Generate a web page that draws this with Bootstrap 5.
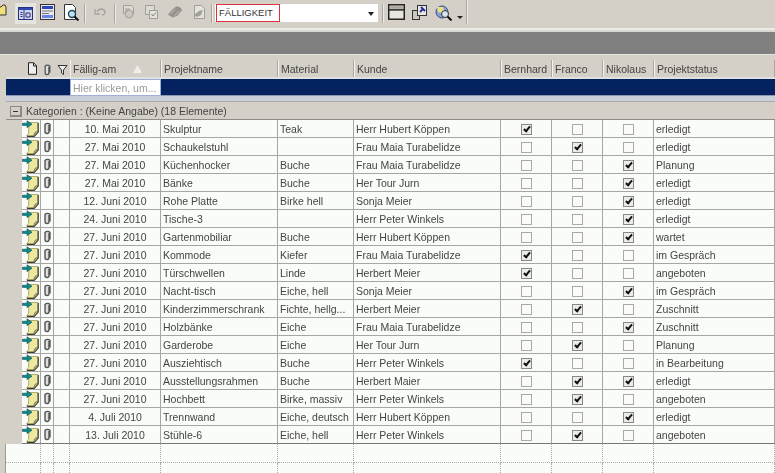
<!DOCTYPE html>
<html lang="de"><head><meta charset="utf-8"><title>Fälligkeit</title>
<link href="https://cdn.jsdelivr.net/npm/bootstrap@5.3.0/dist/css/bootstrap.min.css" rel="stylesheet">
<style>
html,body{height:473px;overflow:hidden}
body{background:#d4d0c8;font-family:"Liberation Sans",Arial,sans-serif;font-size:10.5px;color:#444}
.soft{filter:blur(.7px);height:473px}
.tbar{height:26px;padding:4px 0 0 0;overflow:hidden}
.tb-i{display:block;flex:none}
.tb-act{width:21px;height:21px;margin:-1px 4px 0 8px;background:#e6e4df;display:flex;align-items:center;justify-content:center}
.tb-sep{width:1px;height:19px;background:#a9a69f;box-shadow:1px 0 #eeece8;flex:none}
.combo{width:163px;height:18px;margin:0 0 0 3px;background:#fff;position:relative;flex:none}
.combo-red{display:block;width:64px;height:18px;margin-left:1px;border:1px solid #d8353a;padding:0 0 0 2px;line-height:15px;font-size:9.5px;color:#333}
.combo-arrow{position:absolute;right:4px;top:8px;width:0;height:0;border:3px solid transparent;border-top:4px solid #222}
.strip{height:6px;background:linear-gradient(#d4d0c8 0,#d4d0c8 2px,#ecebe6 2px,#ecebe6 4px,#dad8d2 4px)}
.band{height:22px;background:#808080}
.lead-gap{height:6px;background:#d4d0c8;border-top:1px solid #e6e5e0}
.wrap{padding-left:6px}
.grid-t{table-layout:fixed;width:769px;margin:0;border-collapse:separate;border-spacing:0;--bs-table-bg:transparent;color:#444;font-size:10.5px}
.table.grid-t>:not(caption)>*>*{padding:0 2px;height:18px;line-height:16px;border:0;white-space:nowrap;overflow:hidden;color:#444;vertical-align:middle;box-shadow:none}
.table.grid-t .hd>th{height:17px;background:#d4d0c8;font-weight:400;border-left:1px solid #f3f2ee;border-right:1px solid #aaa7a0;padding:1px 2px 0 2px}
.table.grid-t .hd>th.plain{border-left:0;border-right:0;padding:0;text-align:center}
.hd-doc{margin:0 3px 0 auto}
.table.grid-t .hd-gap>td{height:2px;padding:0;background:#dfe0e0;line-height:0}
.table.grid-t .flt>td{height:17px;background:#04225f;padding:0;border-bottom:1px solid #8b96b2}
.table.grid-t .flt>td.flt-in{background:#fff;border:1px solid #9fb0d6;color:#9a9a9a;padding:0 2px;line-height:14px}
.table.grid-t .flt-gap>td{height:6px;padding:0;background:#c9cfdb;line-height:0;border-bottom:1px solid #aaa}
.table.grid-t .grp>td{height:18px;background:#d4d0c8;border-bottom:1px solid #8c8c88;padding:0 3px}
.exp{display:inline-block;width:12px;height:11px;background:#d4d0c8;border:1px solid #8a8a86;border-width:1px 2px 2px 1px;position:relative;margin:0 4px 0 1px;vertical-align:-2px}
.exp::after{content:"";position:absolute;left:2px;right:2px;top:4px;height:1px;background:#333}
.table.grid-t .rw>td{background:#f9fcf8;border-right:1px solid #a6a6a6;border-bottom:1px solid #a6a6a6}
.table.grid-t .rw>td.ind{background:#d4d0c8;border:0}
.table.grid-t .rw>td.ic{padding:0;text-align:center}
.table.grid-t .rw>td.dt{text-align:center;padding:0}
.rw svg{display:inline-block;vertical-align:top}
.table.grid-t .rw:last-child>td:not(.ind){border-bottom:1px solid #777}
.cb{display:block;width:11px;height:11px;margin:2px auto 0;border:1px solid #a9a9a9;background:#fbfcfa;position:relative}
.cb-on{background:#ececea;border-color:#888}
.cb-on::after{content:"";position:absolute;left:3px;top:0;width:4px;height:7px;border:solid #111;border-width:0 2px 2px 0;transform:rotate(40deg)}
.blank{background:#fafcfa;height:29px;border-left:1px solid #9a9a96;margin-left:-1px}
.blank-r{display:flex}
.blank-c{flex:none;border-right:1px dotted #aaa;border-bottom:1px dotted #aaa;height:19px}
.blank-r2 .blank-c{border-bottom:0;height:10px}
.cw35{width:35px}.cw13{width:13px}.cw16{width:16px}.cw91{width:91px}.cw117{width:117px}.cw76{width:76px}.cw147{width:147px}.cw51{width:51px}.cw121{width:121px}
</style></head><body>
<svg width="0" height="0" class="position-absolute"><defs>
<symbol id="note" viewBox="0 0 18 17"><path d="M7 2.500h9v9.500l-4 4H4.500l2-2.500z" fill="#ece8a0" stroke="#a09d55" stroke-width=".8"/><path d="M16.200 3v9l-4 4.300H5" fill="none" stroke="#3c3c2c" stroke-width="1.200"/><path d="M12 16c0-3 1-4.500 4-4.500" fill="#bdb95f" stroke="#666" stroke-width=".8"/><path d="M.5 3.200h4.500V.8L10 4.200 5 7.600V5.400H.5z" fill="#0c8a8c" stroke="#0b4a50" stroke-width=".6"/></symbol>
<symbol id="clip" viewBox="0 0 9 14"><path d="M6.500 3.500v6.500a2 2 0 0 1-4 0V3a3 2.500 0 0 1 5 0v7" transform="translate(-.5 .5)" fill="#ddd" stroke="#555" stroke-width="1.400"/></symbol>
</defs></svg>
<div class="soft">
<div class="tbar d-flex align-items-start">
<svg class="tb-i" width="7" height="13" viewBox="0 0 7 13"><path d="M-3 3h4l2-2h2l1 2v8H-3z" fill="#efe27c" stroke="#333"/></svg>
<span class="tb-act"><svg width="15" height="13" viewBox="0 0 15 13"><rect x=".5" y=".5" width="14" height="12" fill="#cfd4ef" stroke="#2a2f7a"/><rect x="1" y="1" width="13" height="2" fill="#2f46b5"/><path d="M6 3v9M2.500 5.500h2M2.500 7.500h2M2.500 9.500h2M8 6h4v4H8z" stroke="#2a2f7a" fill="none"/></svg></span>
<svg class="tb-i me-2" width="15" height="16" viewBox="0 0 15 16"><rect x=".5" y=".5" width="14" height="15" fill="#e8e8ee" stroke="#333"/><rect x="2" y="2" width="11" height="3" fill="#2f46b5"/><path d="M2 7h11M2 9.500h7" stroke="#777"/><rect x="2" y="11" width="11" height="3" fill="#6d86e0"/></svg>
<svg class="tb-i" width="17" height="17" viewBox="0 0 17 17"><path d="M1.500.5h8l3 3v12h-11z" fill="#fff" stroke="#333"/><circle cx="9" cy="10" r="3.500" fill="#bfe3ef" stroke="#1a4a5a" stroke-width="1.400"/><path d="M11.500 12.500l4 4" stroke="#111" stroke-width="2"/></svg>
<span class="tb-sep ms-1 me-2"></span>
<svg class="tb-i" style="margin:2px 7px 0 1px" width="13" height="11" viewBox="0 0 13 11"><path d="M3 6c2-4 7-4 8 0 0 2-2 3-3 3M1 3v5h5" fill="none" stroke="#a5a39c" stroke-width="1.300"/></svg>
<span class="tb-sep me-1"></span>
<span class="d-flex gap-2" style="padding-left:2px">
<svg class="tb-i" width="15" height="16" viewBox="0 0 15 16"><path d="M2.500 1.500h8l2 2v6h-10z" fill="#dcdad4" stroke="#a09e97"/><circle cx="8" cy="10" r="4" fill="#c9c7c0" stroke="#a09e97"/><path d="M4 5h5M4 7h3" stroke="#a09e97"/></svg>
<svg class="tb-i" width="15" height="16" viewBox="0 0 15 16"><path d="M1.500 1.500h9v9h-9z" fill="#dcdad4" stroke="#a09e97"/><rect x="5.500" y="6.500" width="8" height="8" fill="#e4e2dc" stroke="#a09e97"/><path d="M7.500 10l1.500 2 3-3.500" fill="none" stroke="#86847d"/></svg>
<svg class="tb-i" width="16" height="15" viewBox="0 0 17 15"><path d="M1 11l5-6 4-3 4 1 2 3-5 6-5 2z" fill="#95938c"/><path d="M4 10l5-5M8 12l5-5" stroke="#c6c4bd"/></svg>
<svg class="tb-i" width="16" height="16" viewBox="0 0 16 16"><path d="M3.500 1.500h7l3 3v10h-10z" fill="#e4e2dc" stroke="#a09e97"/><path d="M3 11l5-4 4-1-2 5-4 2z" fill="#a09e97"/></svg>
</span>
<span class="tb-sep ms-1"></span>
<span class="combo"><span class="combo-red">FÄLLIGKEIT</span><span class="combo-arrow"></span></span>
<span class="tb-sep ms-1"></span>
<svg class="tb-i" style="margin:0 7px 0 5px" width="17" height="16" viewBox="0 0 16 15"><rect x=".7" y=".7" width="14.600" height="13.600" fill="#e8e6e0" stroke="#222" stroke-width="1.400"/><path d="M1 5.500h14" stroke="#222" stroke-width="1.400"/><rect x="2" y="2" width="12" height="2.500" fill="#a9a79f"/></svg>
<svg class="tb-i" style="margin:0 7px 0 0" width="16" height="16" viewBox="0 0 16 16"><rect x=".5" y="6.500" width="7" height="9" fill="#c9c7c0" stroke="#333"/><rect x="5.500" y="1.500" width="9" height="10" fill="#e8e6e0" stroke="#333"/><path d="M8 8l3-3M9 3l4 4" stroke="#1c2f9c" stroke-width="1.800"/></svg>
<svg class="tb-i" style="margin:0 5px 0 0" width="17" height="17" viewBox="0 0 17 17"><circle cx="7" cy="8" r="6" fill="#8ea0d8" stroke="#3a4a80"/><path d="M2 3h6l1 3-3 3-3-1z" fill="#e7e08a"/><circle cx="10" cy="10" r="3.500" fill="#cfe6ee" stroke="#333"/><path d="M12.500 12.500l4 4" stroke="#111" stroke-width="2"/></svg>
<span class="tb-i" style="margin-top:12px;border:3px solid transparent;border-top:3px solid #222"></span>
<span class="tb-sep" style="margin-left:3px;height:24px;margin-top:-4px"></span>
</div>
<div class="strip"></div>
<div class="band"></div>
<div class="lead-gap"></div>

<div class="wrap">
<table class="table grid-t mb-0">
<colgroup><col style="width:16px"><col style="width:19px"><col style="width:13px"><col style="width:16px"><col style="width:91px"><col style="width:117px"><col style="width:76px"><col style="width:147px"><col style="width:51px"><col style="width:51px"><col style="width:51px"><col style="width:121px"></colgroup>
<thead>
<tr class="hd"><th class="plain"></th>
<th class="plain"><svg width="11" height="13" viewBox="0 0 11 13" class="d-block hd-doc"><path d="M1.500.7h5l3 3v8.600h-8z" fill="#eee" stroke="#222"/><path d="M6.500 1v3h3" fill="none" stroke="#222"/></svg></th>
<th class="plain"><svg width="9" height="13"><use href="#clip"/></svg></th>
<th class="plain"><svg width="11" height="12" viewBox="0 0 11 12"><path d="M1 1.500h9L6.500 6v4.500L4.500 9V6z" fill="#eee" stroke="#333"/></svg></th>
<th><span class="d-flex justify-content-between"><span>Fällig-am</span><svg width="9" height="8" viewBox="0 0 9 8" style="margin:4px 16px 0 0"><path d="M4.500 0L9 8H0z" fill="#efeee9"/></svg></span></th>
<th>Projektname</th><th>Material</th><th>Kunde</th><th>Bernhard</th><th>Franco</th><th>Nikolaus</th><th>Projektstatus</th></tr>
<tr class="hd-gap"><td colspan="12"></td></tr>
<tr class="flt"><td colspan="4"></td><td class="flt-in">Hier klicken, um...</td><td colspan="7"></td></tr>
<tr class="flt-gap"><td colspan="12"></td></tr>
<tr class="grp"><td colspan="12"><span class="exp"></span>Kategorien : (Keine Angabe) (18 Elemente)</td></tr>
</thead>
<tbody>
<tr class="rw"><td class="ind"></td><td class="ic"><svg width="18" height="17"><use href="#note"/></svg></td><td class="ic"><svg width="9" height="14"><use href="#clip"/></svg></td><td></td><td class="dt">10. Mai 2010</td><td>Skulptur</td><td>Teak</td><td>Herr Hubert Köppen</td><td><span class="cb cb-on"></span></td><td><span class="cb"></span></td><td><span class="cb"></span></td><td>erledigt</td></tr>
<tr class="rw"><td class="ind"></td><td class="ic"><svg width="18" height="17"><use href="#note"/></svg></td><td class="ic"><svg width="9" height="14"><use href="#clip"/></svg></td><td></td><td class="dt">27. Mai 2010</td><td>Schaukelstuhl</td><td></td><td>Frau Maia Turabelidze</td><td><span class="cb"></span></td><td><span class="cb cb-on"></span></td><td><span class="cb"></span></td><td>erledigt</td></tr>
<tr class="rw"><td class="ind"></td><td class="ic"><svg width="18" height="17"><use href="#note"/></svg></td><td class="ic"><svg width="9" height="14"><use href="#clip"/></svg></td><td></td><td class="dt">27. Mai 2010</td><td>Küchenhocker</td><td>Buche</td><td>Frau Maia Turabelidze</td><td><span class="cb"></span></td><td><span class="cb"></span></td><td><span class="cb cb-on"></span></td><td>Planung</td></tr>
<tr class="rw"><td class="ind"></td><td class="ic"><svg width="18" height="17"><use href="#note"/></svg></td><td class="ic"><svg width="9" height="14"><use href="#clip"/></svg></td><td></td><td class="dt">27. Mai 2010</td><td>Bänke</td><td>Buche</td><td>Her Tour Jurn</td><td><span class="cb"></span></td><td><span class="cb"></span></td><td><span class="cb cb-on"></span></td><td>erledigt</td></tr>
<tr class="rw"><td class="ind"></td><td class="ic"><svg width="18" height="17"><use href="#note"/></svg></td><td class="ic"></td><td></td><td class="dt">12. Juni 2010</td><td>Rohe Platte</td><td>Birke hell</td><td>Sonja Meier</td><td><span class="cb"></span></td><td><span class="cb"></span></td><td><span class="cb cb-on"></span></td><td>erledigt</td></tr>
<tr class="rw"><td class="ind"></td><td class="ic"><svg width="18" height="17"><use href="#note"/></svg></td><td class="ic"><svg width="9" height="14"><use href="#clip"/></svg></td><td></td><td class="dt">24. Juni 2010</td><td>Tische-3</td><td></td><td>Herr Peter Winkels</td><td><span class="cb"></span></td><td><span class="cb"></span></td><td><span class="cb cb-on"></span></td><td>erledigt</td></tr>
<tr class="rw"><td class="ind"></td><td class="ic"><svg width="18" height="17"><use href="#note"/></svg></td><td class="ic"><svg width="9" height="14"><use href="#clip"/></svg></td><td></td><td class="dt">27. Juni 2010</td><td>Gartenmobiliar</td><td>Buche</td><td>Herr Hubert Köppen</td><td><span class="cb"></span></td><td><span class="cb"></span></td><td><span class="cb cb-on"></span></td><td>wartet</td></tr>
<tr class="rw"><td class="ind"></td><td class="ic"><svg width="18" height="17"><use href="#note"/></svg></td><td class="ic"><svg width="9" height="14"><use href="#clip"/></svg></td><td></td><td class="dt">27. Juni 2010</td><td>Kommode</td><td>Kiefer</td><td>Frau Maia Turabelidze</td><td><span class="cb cb-on"></span></td><td><span class="cb"></span></td><td><span class="cb"></span></td><td>im Gespräch</td></tr>
<tr class="rw"><td class="ind"></td><td class="ic"><svg width="18" height="17"><use href="#note"/></svg></td><td class="ic"><svg width="9" height="14"><use href="#clip"/></svg></td><td></td><td class="dt">27. Juni 2010</td><td>Türschwellen</td><td>Linde</td><td>Herbert Meier</td><td><span class="cb cb-on"></span></td><td><span class="cb"></span></td><td><span class="cb"></span></td><td>angeboten</td></tr>
<tr class="rw"><td class="ind"></td><td class="ic"><svg width="18" height="17"><use href="#note"/></svg></td><td class="ic"><svg width="9" height="14"><use href="#clip"/></svg></td><td></td><td class="dt">27. Juni 2010</td><td>Nacht-tisch</td><td>Eiche, hell</td><td>Sonja Meier</td><td><span class="cb"></span></td><td><span class="cb"></span></td><td><span class="cb cb-on"></span></td><td>im Gespräch</td></tr>
<tr class="rw"><td class="ind"></td><td class="ic"><svg width="18" height="17"><use href="#note"/></svg></td><td class="ic"><svg width="9" height="14"><use href="#clip"/></svg></td><td></td><td class="dt">27. Juni 2010</td><td>Kinderzimmerschrank</td><td>Fichte, hellg...</td><td>Herbert Meier</td><td><span class="cb"></span></td><td><span class="cb cb-on"></span></td><td><span class="cb"></span></td><td>Zuschnitt</td></tr>
<tr class="rw"><td class="ind"></td><td class="ic"><svg width="18" height="17"><use href="#note"/></svg></td><td class="ic"><svg width="9" height="14"><use href="#clip"/></svg></td><td></td><td class="dt">27. Juni 2010</td><td>Holzbänke</td><td>Eiche</td><td>Frau Maia Turabelidze</td><td><span class="cb"></span></td><td><span class="cb"></span></td><td><span class="cb cb-on"></span></td><td>Zuschnitt</td></tr>
<tr class="rw"><td class="ind"></td><td class="ic"><svg width="18" height="17"><use href="#note"/></svg></td><td class="ic"><svg width="9" height="14"><use href="#clip"/></svg></td><td></td><td class="dt">27. Juni 2010</td><td>Garderobe</td><td>Eiche</td><td>Her Tour Jurn</td><td><span class="cb"></span></td><td><span class="cb cb-on"></span></td><td><span class="cb"></span></td><td>Planung</td></tr>
<tr class="rw"><td class="ind"></td><td class="ic"><svg width="18" height="17"><use href="#note"/></svg></td><td class="ic"><svg width="9" height="14"><use href="#clip"/></svg></td><td></td><td class="dt">27. Juni 2010</td><td>Ausziehtisch</td><td>Buche</td><td>Herr Peter Winkels</td><td><span class="cb cb-on"></span></td><td><span class="cb"></span></td><td><span class="cb"></span></td><td>in Bearbeitung</td></tr>
<tr class="rw"><td class="ind"></td><td class="ic"><svg width="18" height="17"><use href="#note"/></svg></td><td class="ic"><svg width="9" height="14"><use href="#clip"/></svg></td><td></td><td class="dt">27. Juni 2010</td><td>Ausstellungsrahmen</td><td>Buche</td><td>Herbert Maier</td><td><span class="cb"></span></td><td><span class="cb cb-on"></span></td><td><span class="cb cb-on"></span></td><td>erledigt</td></tr>
<tr class="rw"><td class="ind"></td><td class="ic"><svg width="18" height="17"><use href="#note"/></svg></td><td class="ic"><svg width="9" height="14"><use href="#clip"/></svg></td><td></td><td class="dt">27. Juni 2010</td><td>Hochbett</td><td>Birke, massiv</td><td>Herr Peter Winkels</td><td><span class="cb"></span></td><td><span class="cb cb-on"></span></td><td><span class="cb"></span></td><td>angeboten</td></tr>
<tr class="rw"><td class="ind"></td><td class="ic"><svg width="18" height="17"><use href="#note"/></svg></td><td class="ic"><svg width="9" height="14"><use href="#clip"/></svg></td><td></td><td class="dt">4. Juli 2010</td><td>Trennwand</td><td>Eiche, deutsch</td><td>Herr Hubert Köppen</td><td><span class="cb"></span></td><td><span class="cb"></span></td><td><span class="cb cb-on"></span></td><td>erledigt</td></tr>
<tr class="rw"><td class="ind"></td><td class="ic"><svg width="18" height="17"><use href="#note"/></svg></td><td class="ic"><svg width="9" height="14"><use href="#clip"/></svg></td><td></td><td class="dt">13. Juli 2010</td><td>Stühle-6</td><td>Eiche, hell</td><td>Herr Peter Winkels</td><td><span class="cb"></span></td><td><span class="cb cb-on"></span></td><td><span class="cb"></span></td><td>angeboten</td></tr>
</tbody>
</table>
<div class="blank">
<div class="blank-r"><span class="blank-c cw35"></span><span class="blank-c cw13"></span><span class="blank-c cw16"></span><span class="blank-c cw91"></span><span class="blank-c cw117"></span><span class="blank-c cw76"></span><span class="blank-c cw147"></span><span class="blank-c cw51"></span><span class="blank-c cw51"></span><span class="blank-c cw51"></span><span class="blank-c cw121"></span></div>
<div class="blank-r blank-r2"><span class="blank-c cw35"></span><span class="blank-c cw13"></span><span class="blank-c cw16"></span><span class="blank-c cw91"></span><span class="blank-c cw117"></span><span class="blank-c cw76"></span><span class="blank-c cw147"></span><span class="blank-c cw51"></span><span class="blank-c cw51"></span><span class="blank-c cw51"></span><span class="blank-c cw121"></span></div>
</div>
</div>
</div>
</body></html>
